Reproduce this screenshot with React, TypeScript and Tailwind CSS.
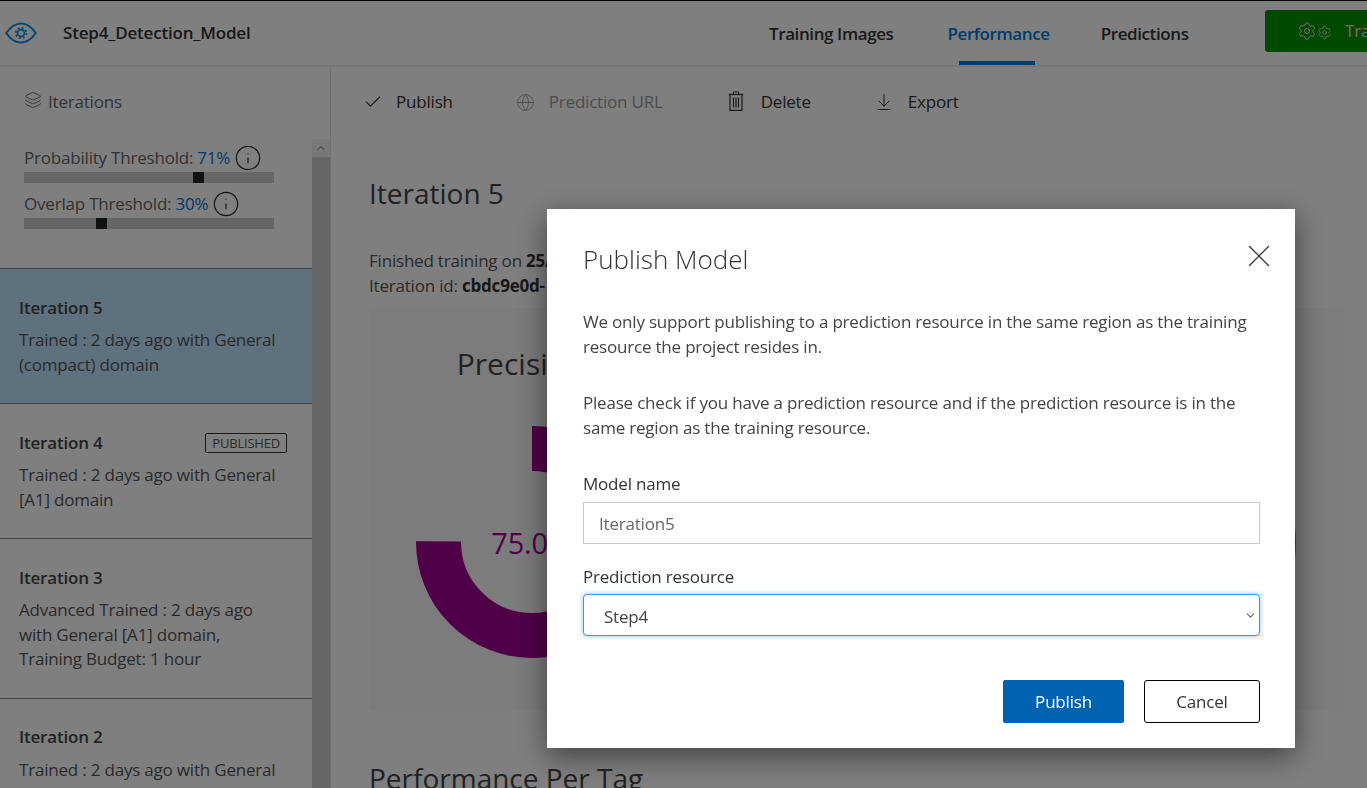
import { Check, Globe, ArrowDownToLine, Layers, Info, Settings, X, ChevronUp, ChevronDown } from "lucide-react";

const iterations = [
  { name: "Iteration 5", lines: ["Trained : 2 days ago with General", "(compact) domain"], selected: true },
  { name: "Iteration 4", lines: ["Trained : 2 days ago with General", "[A1] domain"], published: true },
  { name: "Iteration 3", lines: ["Advanced Trained : 2 days ago", "with General [A1] domain,", "Training Budget: 1 hour"] },
  { name: "Iteration 2", lines: ["Trained : 2 days ago with General", "[A1] domain"] },
];

// only the first chart's labels show, the rest sit behind the dialog
const charts = [
  { id: "precision", title: "Precision", value: "75.0%", color: "#a00090", percent: 75, cls: "" },
  { id: "recall", title: "", value: "", color: "#a00090", percent: 75, cls: "" },
  { id: "map", title: "", value: "", color: "#5a9a00", percent: 89, cls: "pr-[3px]" },
];

function EyeLogo() {
  return (
    <svg width="32" height="22" viewBox="0 0 32 22" fill="none" stroke="#0a8fe8" strokeWidth="2">
      <path d="M1.2 11 C6 4 10.5 1.4 16 1.4 S26 4 30.8 11 C26 18 21.5 20.6 16 20.6 S6 18 1.2 11 Z" />
      <circle cx="16" cy="11" r="3.4" strokeWidth="1.6" />
      <circle cx="16" cy="11" r="5.2" strokeWidth="1.8" strokeDasharray="2 2.08" />
    </svg>
  );
}

function TrashIcon() {
  return (
    <svg width="16" height="20" viewBox="0 0 16 20" fill="none" stroke="#333" strokeWidth="1.2">
      <path d="M5.5 3 V1 H10.5 V3" />
      <path d="M0.5 3.5 H15.5" />
      <path d="M2 3.5 V19.4 H14 V3.5" />
      <path d="M5.5 6.5 V16.5 M8 6.5 V16.5 M10.5 6.5 V16.5" />
    </svg>
  );
}

function Donut({ color, percent }: { color: string; percent: number }) {
  const r = 93.5;
  const c = 2 * Math.PI * r;
  return (
    <svg width="232" height="232" viewBox="0 0 232 232" className="-rotate-90">
      <circle cx="116" cy="116" r={r} fill="none" stroke={color} strokeWidth="45" strokeDasharray={`${(c * percent) / 100} ${c}`} />
    </svg>
  );
}

function Slider({ label, value, left }: { label: string; value: string; left: string }) {
  return (
    <div className="w-[250px]">
      <div className="flex h-[25px] items-center whitespace-nowrap text-[#666]">
        <span>{label}:</span>
        <span className="ml-1 text-[#0078d4]">{value}</span>
        <Info className="ml-[4px] h-[28px] w-[28px] shrink-0 text-[#222]" strokeWidth={1} />
      </div>
      <div className="relative mt-[2px] h-[11px] bg-[#ccc]">
        <div className={`absolute top-0 h-[11px] w-[11px] bg-[#222] ${left}`} />
      </div>
    </div>
  );
}

export default function App() {
  return (
    <div className="h-[788px] w-[1367px] overflow-hidden bg-white font-['Open_Sans',sans-serif] text-[17px] tracking-[-0.2px] text-[#555]">
      <header className="flex h-[67px] border-t border-b-2 border-t-black border-b-[#eee]">
        <div className="flex w-[761px] shrink-0 items-center pl-[5px]">
          <EyeLogo />
          <span className="ml-[26px] font-semibold text-[#333]">Step4_Detection_Model</span>
        </div>
        <nav className="flex w-[504px] shrink-0 whitespace-nowrap font-semibold tracking-[-0.4px] text-[#333]">
          <a className="px-2 pt-[20px]">Training Images</a>
          <a className="relative ml-[38px] px-2 pt-[20px] text-[#0078d4]">
            Performance
            <span className="absolute bottom-0 left-[20px] h-[4px] w-[76px] bg-[#0078d4]" />
          </a>
          <a className="ml-[35px] px-2 pt-[20px]">Predictions</a>
        </nav>
        <button className="mt-[9px] flex h-[42px] w-[200px] shrink-0 items-center rounded-[3px] bg-[#009400] pl-[32px] text-[#ddd]">
          <Settings className="h-[20px] w-[20px]" strokeWidth={1.2} />
          <Settings className="mt-[2px] h-[15px] w-[15px]" strokeWidth={1.2} />
          <span className="ml-[13px]">Train</span>
        </button>
      </header>

      <div className="flex h-[721px]">
        <aside className="flex w-[331px] shrink-0 flex-col border-r border-[#e0e0e0]">
          <div className="flex h-[72px] shrink-0 items-center pb-[2px] pl-[24px] text-[#666]">
            <Layers className="-mt-[4px] h-[18px] w-[18px]" strokeWidth={1.2} />
            <span className="ml-[6px]">Iterations</span>
          </div>
          <div className="flex min-h-0 flex-1">
            <div className="w-[312px] overflow-hidden">
              <div className="flex h-[129px] flex-col gap-[8px] pl-[24px] pt-[6px]">
                <Slider label="Probability Threshold" value="71%" left="left-[169px]" />
                <Slider label="Overlap Threshold" value="30%" left="left-[72px]" />
              </div>
              {iterations.map((it) => (
                <div
                  key={it.name}
                  className={`border-t border-[#888] px-[19px] pb-[26px] pt-[26px] ${it.selected ? "bg-[#bde3ff]" : ""}`}
                >
                  <div className="flex h-[25px] items-center justify-between pr-[6px]">
                    <span className="font-semibold text-[#444]">{it.name}</span>
                    {it.published && (
                      <span className="rounded-[2px] border border-[#333] px-[6px] text-[13px] leading-[18px] text-[#555]">PUBLISHED</span>
                    )}
                  </div>
                  <div className="mt-[8px] leading-[24.5px] text-[#555]">
                    {it.lines.map((line) => (
                      <div key={line}>{line}</div>
                    ))}
                  </div>
                </div>
              ))}
            </div>
            <div className="w-[18px] bg-[#ccc]">
              <div className="flex h-[18px] items-center justify-center bg-[#f0f0f0]">
                <ChevronUp className="h-[12px] w-[12px] text-[#aaa]" strokeWidth={3} />
              </div>
            </div>
          </div>
        </aside>

        <main className="min-w-0 flex-1">
          <div className="flex h-[70px] items-center pl-[32px] text-[#333]">
            <Check className="h-[20px] w-[20px]" strokeWidth={1.3} />
            <span className="ml-[13px]">Publish</span>
            <Globe className="ml-[63px] h-[19px] w-[19px] text-[#999]" strokeWidth={1.1} />
            <span className="ml-[14px] text-[#999]">Prediction URL</span>
            <span className="-mt-[3px] ml-[65px]">
              <TrashIcon />
            </span>
            <span className="ml-[17px]">Delete</span>
            <ArrowDownToLine className="ml-[63px] h-[20px] w-[20px]" strokeWidth={1.2} />
            <span className="ml-[14px]">Export</span>
          </div>
          <div className="pl-[38px] pr-[23px]">
            <h1 className="mt-[34px] text-[28px] leading-[44px] tracking-normal text-[#444]">Iteration 5</h1>
            <p className="mt-[33px] leading-[25px]">
              Finished training on <b className="text-[#333]">25/</b>
            </p>
            <p className="leading-[25px]">
              Iteration id: <b className="text-[#333]">cbdc9e0d-</b>
            </p>
            <div className="mt-[10px] grid h-[402px] grid-cols-3 bg-[#f8f8f8]">
              {charts.map((chart) => (
                <div key={chart.id} className={`relative flex flex-col items-center pt-[36px] ${chart.cls}`}>
                  <div className="h-[40px] pr-[22px] text-[30px] leading-[40px] tracking-normal text-[#444]">{chart.title}</div>
                  <div className="mt-[42px]">
                    <Donut color={chart.color} percent={chart.percent} />
                  </div>
                  <div className="absolute top-[213px] text-[29px] font-medium leading-[44px]" style={{ color: chart.color }}>
                    {chart.value}
                  </div>
                </div>
              ))}
            </div>
            <h2 className="mt-[46px] text-[28px] leading-[44px] tracking-normal text-[#444]">Performance Per Tag</h2>
          </div>
        </main>
      </div>

      {/* modal backdrop and dialog */}
      <div className="fixed inset-0 bg-black/50" />
      <div className="fixed left-[547px] top-[209px] h-[539px] w-[748px] bg-white pl-[36px] pr-[35px] shadow-[0_8px_28px_rgba(0,0,0,0.5)]">
        <div className="flex h-[100px] items-start justify-between pt-[33px]">
          <h3 className="text-[26px] font-light leading-[34px] tracking-normal text-[#333]">Publish Model</h3>
          <button className="-mr-[18px] -mt-[5px] text-[#333]">
            <X className="h-[38px] w-[38px]" strokeWidth={0.8} />
          </button>
        </div>
        <p className="leading-[25px] text-[#444]">
          We only support publishing to a prediction resource in the same region as the training resource the project resides in.
        </p>
        <p className="mt-[31px] leading-[25px] text-[#444]">
          Please check if you have a prediction resource and if the prediction resource is in the same region as the training resource.
        </p>
        <label className="mt-[31px] block font-medium leading-[25px] text-[#333]">Model name</label>
        <input
          readOnly
          value="Iteration5"
          className="mt-[6px] h-[42px] w-[677px] border border-[#c8c8c8] px-[15px] text-[#666] outline-none"
        />
        <label className="mt-[20px] block font-medium leading-[25px] text-[#333]">Prediction resource</label>
        <div className="relative mt-[5px] w-[677px]">
          <select
            defaultValue="Step4"
            className="block h-[42px] w-full appearance-none rounded-[4px] border border-[#3b97ea] bg-white pl-[20px] pt-[3px] text-[#444] shadow-[0_0_5px_rgba(59,151,234,0.6)] outline-none"
          >
            <option>Step4</option>
          </select>
          <ChevronDown className="pointer-events-none absolute right-[3px] top-[15px] h-[13px] w-[13px] text-[#666]" strokeWidth={2} />
        </div>
        <div className="mt-[44px] flex justify-end gap-[20px]">
          <button className="h-[43px] w-[121px] rounded-[2px] bg-[#0063b1] text-white">Publish</button>
          <button className="h-[43px] w-[116px] rounded-[3px] border border-black text-[#333]">Cancel</button>
        </div>
      </div>
    </div>
  );
}
